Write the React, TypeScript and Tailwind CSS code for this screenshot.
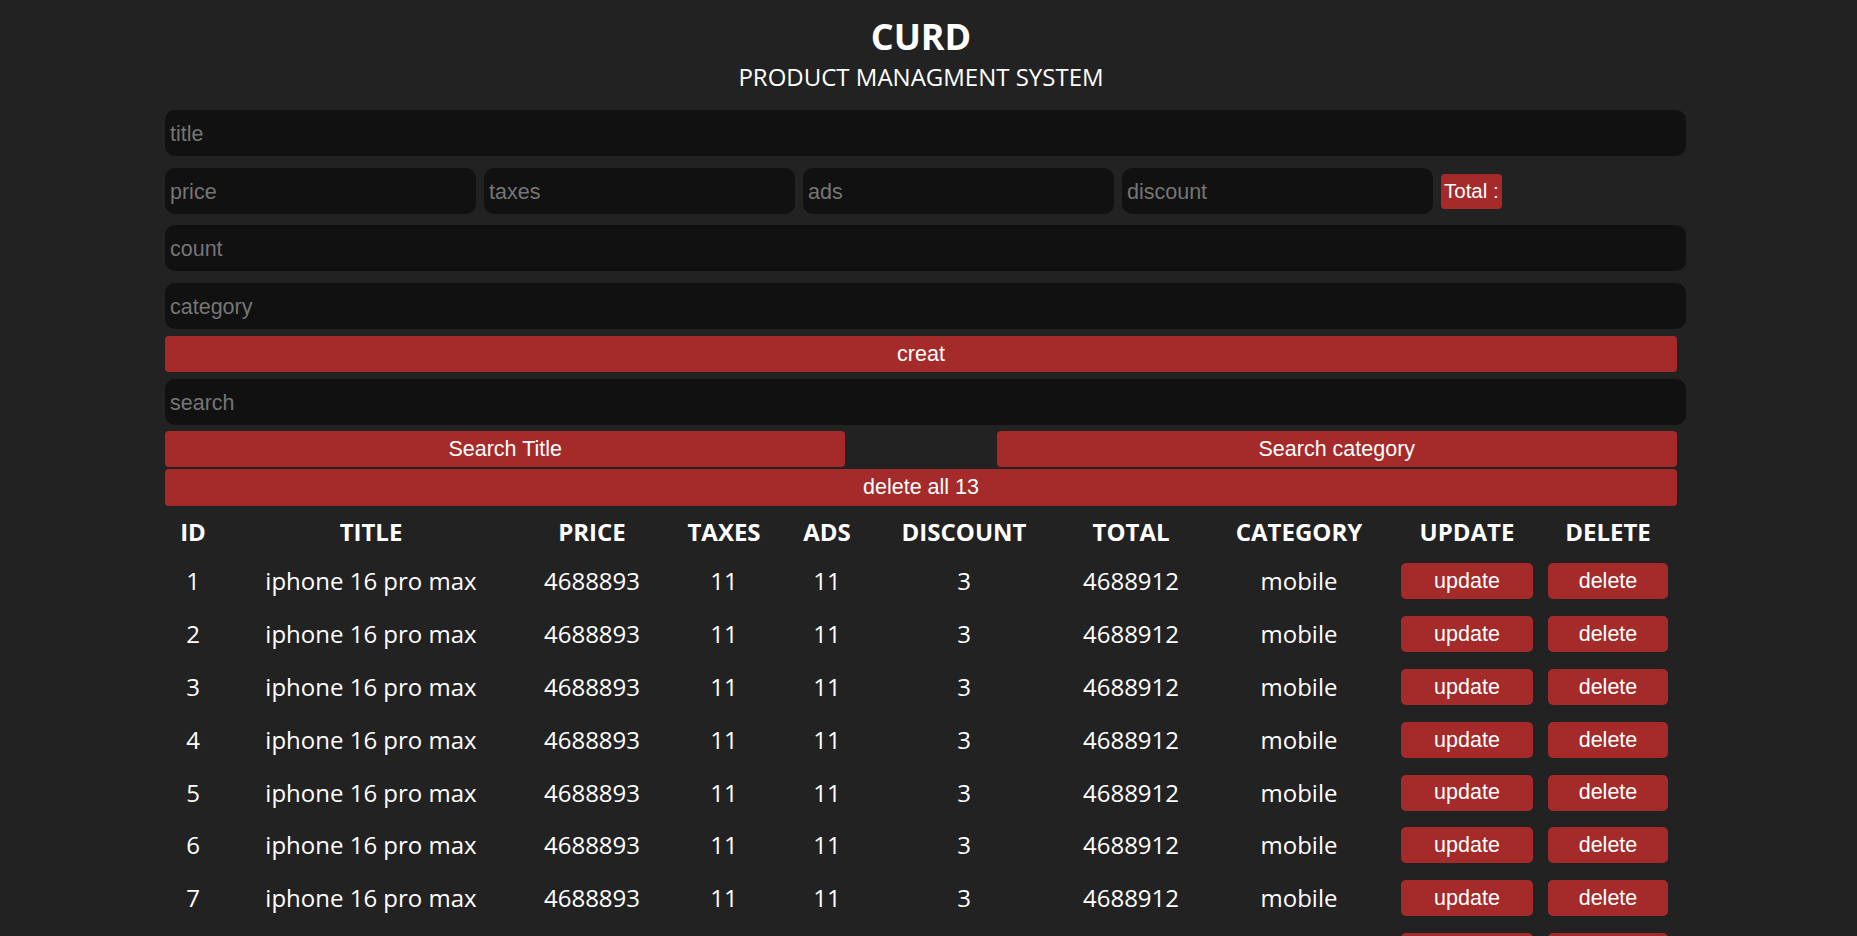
import React from "react";

const cols = ["ID", "TITLE", "PRICE", "TAXES", "ADS", "DISCOUNT", "TOTAL", "CATEGORY", "UPDATE", "DELETE"];

const products = Array.from({ length: 13 }, (_, i) => ({
  id: i + 1,
  title: "iphone 16 pro max",
  price: 4688893,
  taxes: 11,
  ads: 11,
  discount: 3,
  total: 4688912,
  category: "mobile",
}));

const grid =
  "grid grid-cols-[56px_300px_142px_122px_84px_190px_144px_192px_144px_138px] items-center text-center";

const inputCls =
  "h-[46px] rounded-[10px] bg-[#111] px-[5px] pt-[2px] text-[21.5px] text-white outline-none placeholder:text-[#757575] font-['Liberation_Sans',Arial,sans-serif]";

const btnCls =
  "h-[36px] rounded-[4px] bg-[#a52a2a] text-[21.5px] text-white font-['Liberation_Sans',Arial,sans-serif]";

const App: React.FC = () => {
  return (
    <div className="min-h-screen w-full bg-[#222] text-white font-['Open_Sans',sans-serif] pb-10">
      <div className="w-[1842px]">
        <div className="mx-auto flex w-[1512px] flex-col pt-[19px]">
          {/* Header */}
          <div className="text-center">
            <h1 className="text-[36px] font-bold leading-[36px]">CURD</h1>
            <p className="mt-[8px] text-[24px] leading-[28px]">PRODUCT MANAGMENT SYSTEM</p>
          </div>

          {/* Inputs */}
          <input className={`${inputCls} mt-[19px] w-[1521px]`} placeholder="title" />
          <div className="mt-[12px] flex h-[46px] items-center gap-[8px]">
            <input className={`${inputCls} w-[311px]`} placeholder="price" />
            <input className={`${inputCls} w-[311px]`} placeholder="taxes" />
            <input className={`${inputCls} w-[311px]`} placeholder="ads" />
            <input className={`${inputCls} w-[311px]`} placeholder="discount" />
            <span className="flex h-[35px] items-center rounded-[4px] bg-[#a52a2a] px-[3px] text-[20.5px] font-['Liberation_Sans',Arial,sans-serif]">
              Total :
            </span>
          </div>
          <input className={`${inputCls} mt-[11px] w-[1521px]`} placeholder="count" />
          <input className={`${inputCls} mt-[12px] w-[1521px]`} placeholder="category" />
          <button className={`${btnCls} mt-[7px] w-full`}>creat</button>

          {/* Search */}
          <input className={`${inputCls} mt-[7px] w-[1521px]`} placeholder="search" />
          <div className="mt-[6px] flex justify-between">
            <button className={`${btnCls} w-[45%]`}>Search Title</button>
            <button className={`${btnCls} w-[45%]`}>Search category</button>
          </div>
          <button className={`${btnCls} mt-[2px] h-[37px] w-full`}>delete all 13</button>

          {/* Table */}
          <div className="mt-[3px]">
            <div className={`${grid} h-[46px] text-[24px] font-bold`}>
              {cols.map((c) => (
                <div key={c}>{c}</div>
              ))}
            </div>
            {products.map((p) => (
              <div key={p.id} className={`${grid} h-[52.8px] text-[24px]`}>
                <div>{p.id}</div>
                <div>{p.title}</div>
                <div>{p.price}</div>
                <div>{p.taxes}</div>
                <div>{p.ads}</div>
                <div>{p.discount}</div>
                <div>{p.total}</div>
                <div>{p.category}</div>
                <div className="flex justify-center">
                  <button className={`${btnCls} w-[132px] rounded-[5px]`}>update</button>
                </div>
                <div className="flex justify-center">
                  <button className={`${btnCls} w-[120px] rounded-[5px]`}>delete</button>
                </div>
              </div>
            ))}
          </div>
        </div>
      </div>
    </div>
  );
};

export default App;
